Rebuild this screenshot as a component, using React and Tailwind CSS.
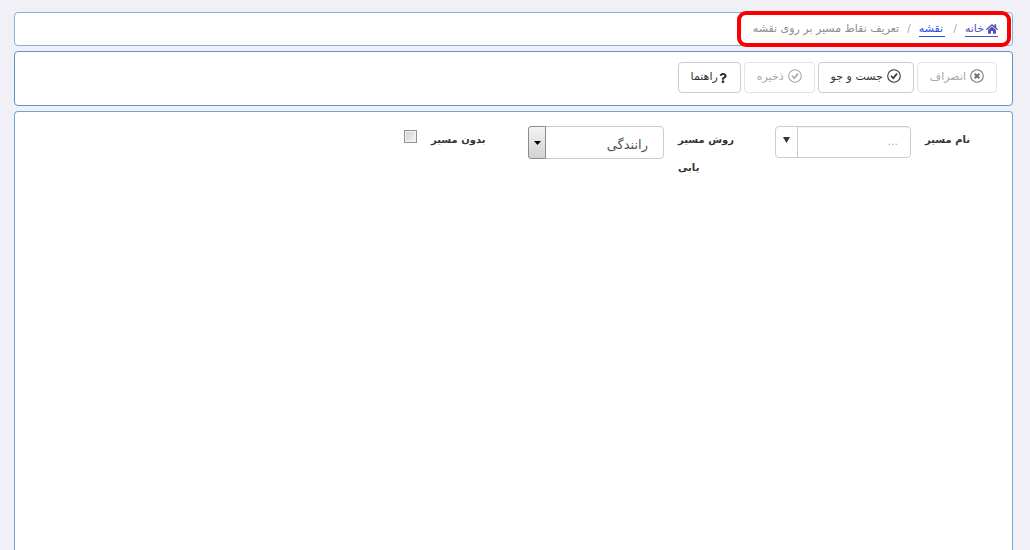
import { FaHome, FaQuestion } from "react-icons/fa"

function CheckIcon() {
  return (
    <svg className="mb-1" width="14" height="14" viewBox="0 0 14 14" fill="none" stroke="currentColor">
      <circle cx="7" cy="7" r="6.3" strokeWidth="1.1" />
      <path d="M4 6.8l2.2 2.4L10 4.6" strokeWidth="1.7" />
    </svg>
  )
}

function CrossIcon() {
  return (
    <svg className="mb-1" width="14" height="14" viewBox="0 0 14 14" fill="none" stroke="#777777">
      <circle cx="7" cy="7" r="6.3" strokeWidth="1.1" />
      <path d="M4.7 4.7l4.6 4.6M9.3 4.7L4.7 9.3" strokeWidth="2.3" />
    </svg>
  )
}

function ToolbarButton({ icon, label, disabled }) {
  return (
    <button
      type="button"
      disabled={disabled}
      className="flex h-[31px] items-center gap-1 rounded-[4px] border border-[#cccccc] bg-white px-3 text-[11px] text-[#333333] disabled:border-[#e4e4e4] disabled:text-[#a8a8a8]"
    >
      {icon}
      <span>{label}</span>
    </button>
  )
}

export default function App() {
  return (
    <div
      dir="rtl"
      className="flex min-h-screen flex-col gap-[5px] bg-[#f0f0f6] pt-3 pr-[17px] pl-[14px] font-['DejaVu_Sans',sans-serif] text-[11px] text-[#333333]"
    >
      {/* Breadcrumb */}
      <header className="relative flex h-[34px] items-center rounded-[4px] border border-[#7fb2de] bg-white px-[14px]">
        <nav className="flex items-center text-[11px] leading-[14px]">
          <a href="#" className="flex items-center gap-[2px] border-b border-[#5050b8] text-[#5050b8]">
            <FaHome size={12} />
            <span>خانه</span>
          </a>
          <span className="px-2 text-[#aaaaaa]">/</span>
          <a href="#" className="border-b border-[#2850e8] pr-[2px] text-[#2850e8]">نقشه</a>
          <span className="px-2 text-[#aaaaaa]">/</span>
          <span className="text-[#8c8c8c]">تعریف نقاط مسیر بر روی نقشه</span>
        </nav>
        <div className="pointer-events-none absolute -top-[2px] -bottom-[2px] right-[1px] w-[274px] rounded-[9px] border-4 border-[#fa0000]" />
      </header>

      {/* Toolbar */}
      <div className="flex h-[55px] gap-[3px] rounded-[4px] border border-[#5a96cc] bg-white px-[15px] pt-[10px]">
        <ToolbarButton icon={<CrossIcon />} label="انصراف" disabled />
        <ToolbarButton icon={<CheckIcon />} label="جست و جو" />
        <ToolbarButton icon={<CheckIcon />} label="ذخیره" disabled />
        <button
          type="button"
          className="flex h-[31px] items-center rounded-[4px] border border-[#cccccc] bg-white px-3 text-[11px] text-[#333333]"
        >
          <FaQuestion size={10} />
          <span>راهنما</span>
        </button>
      </div>

      {/* Route form */}
      <main className="flex flex-1 items-start gap-9 rounded-t-[4px] border border-b-0 border-[#6fa6d8] bg-white pr-[26px] pl-7 pt-[14px]">
        <div className="flex items-start gap-[14px]">
          <label htmlFor="route-name" className="w-[61px] text-left text-[10px] leading-7 font-bold">
            نام مسیر
          </label>
          <div className="flex h-8 w-[136px] overflow-hidden rounded-[4px] border border-[#cccccc] bg-white">
            <input
              id="route-name"
              type="text"
              placeholder="..."
              className="w-0 flex-1 px-3 text-[11px] inset-shadow-2xs outline-none placeholder:text-[#aaaaaa]"
            />
            <button
              type="button"
              aria-label="باز کردن فهرست"
              className="flex w-[22px] justify-center border-r border-[#cccccc] pt-[10px]"
            >
              <svg width="7" height="6" viewBox="0 0 7 6" fill="#333333">
                <path d="M0 0h7L3.5 6z" />
              </svg>
            </button>
          </div>
        </div>

        <div className="flex items-start gap-[14px]">
          <label htmlFor="route-method" className="w-[61px] text-left text-[10px] leading-7 font-bold">
            روش مسیر یابی
          </label>
          <div className="relative w-[136px]">
            <select
              id="route-method"
              className="h-[33px] w-full appearance-none rounded-[4px] border border-[#cccccc] bg-white pt-1 pr-[15px] pl-6 text-[13px] text-[#555555]"
            >
              <option>رانندگی</option>
            </select>
            <span className="pointer-events-none absolute inset-y-0 left-0 flex w-[18px] items-center justify-center rounded-l-[3px] border border-[#8c8c8c] bg-linear-to-b from-[#f4f4f4] to-[#d2d2d2]">
              <svg width="7" height="4" viewBox="0 0 7 4" fill="#000000">
                <path d="M0 0h7L3.5 4z" />
              </svg>
            </span>
          </div>
        </div>

        <div className="flex items-start gap-[14px]">
          <label htmlFor="no-route" className="w-[61px] text-left text-[10px] leading-7 font-bold">
            بدون مسیر
          </label>
          <input
            id="no-route"
            type="checkbox"
            className="mt-1 h-[13px] w-[13px] appearance-none border border-[#8e8f8f] bg-linear-to-br from-[#cbcfd5] to-[#f6f6f6] p-0 ring-1 ring-[#f4f4f4] ring-inset checked:from-[#4a7ab0] checked:to-[#4a7ab0]"
          />
        </div>
      </main>
    </div>
  )
}
